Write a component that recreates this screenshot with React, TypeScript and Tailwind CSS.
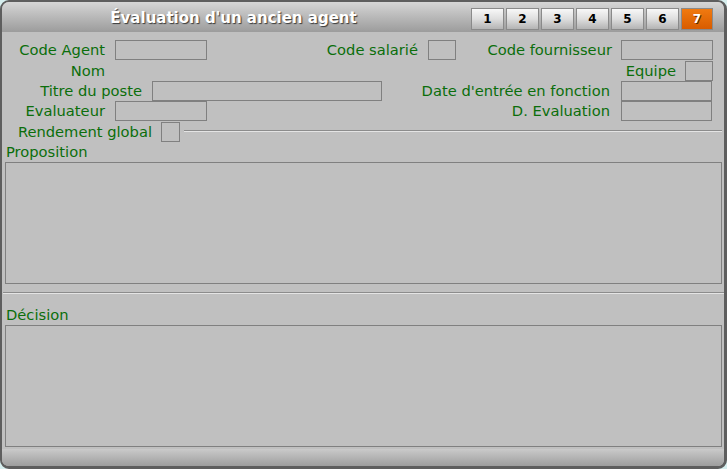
import React from "react";

const TABS = ["1", "2", "3", "4", "5", "6", "7"];

/* flat sunken-less field, same grey as the panel */
function Field({ w, h = "h-[20px]" }: { w: string; h?: string }) {
  return <div className={`${w} ${h} shrink-0 border border-[#808080] bg-[#c0c0c0]`} />;
}

function Label({ w, children }: { w?: string; children: React.ReactNode }) {
  return (
    <div className={`${w ?? ""} shrink-0 whitespace-nowrap text-right leading-[20px]`}>
      {children}
    </div>
  );
}

function Separator({ className = "" }: { className?: string }) {
  return (
    <div className={`flex flex-col ${className}`}>
      <div className="h-px bg-[#8c8c8c]" />
      <div className="h-px bg-[#e4e4e4]" />
    </div>
  );
}

export default function App() {
  return (
    <div className="w-[727px] h-[469px] bg-[#d6eeee]">
      <div
        className="flex h-full w-full flex-col overflow-hidden rounded-[9px] border-t-2 border-l-2 border-r-[3px] border-b-[3px] border-[#5e5e5e] bg-[#c0c0c0] text-[14.7px] text-[#0b6e0b]"
        style={{ fontFamily: '"DejaVu Sans", Verdana, sans-serif' }}
      >
        {/* title bar */}
        <div className="flex h-[30px] shrink-0 items-start bg-gradient-to-b from-[#d6d6d6] to-[#9c9c9c]">
          <div className="flex-1 pr-[6px] pt-[5px] text-center text-[15px] font-bold text-white [text-shadow:1px_1px_1px_#3a3a3a]">
            Évaluation d'un ancien agent
          </div>
          <div className="mr-[11px] mt-[6px] flex gap-[2px]">
            {TABS.map((t) => (
              <div
                key={t}
                className={
                  t === "7"
                    ? "flex h-[22px] w-[32px] items-center justify-center border border-[#8a8a8a] bg-gradient-to-b from-[#f07a10] to-[#d85c00] text-[12px] font-bold text-white [text-shadow:1px_1px_0_#5a2a00]"
                    : "flex h-[22px] w-[33px] items-center justify-center border border-[#8a8a8a] bg-gradient-to-b from-[#f8f8f8] via-[#dedede] to-[#b4b4b4] text-[12px] font-bold text-black"
                }
              >
                {t}
              </div>
            ))}
          </div>
        </div>

        {/* form body */}
        <div className="flex flex-1 flex-col pt-[8px]">
          <div className="flex h-[21px] items-start">
            <Label w="w-[103px]">Code Agent</Label>
            <div className="ml-[10px]"><Field w="w-[92px]" /></div>
            <Label w="w-[211px]">Code salarié</Label>
            <div className="ml-[10px]"><Field w="w-[28px]" /></div>
            <Label w="w-[156px]">Code fournisseur</Label>
            <div className="ml-[9px]"><Field w="w-[92px]" /></div>
          </div>

          <div className="flex h-[20px] items-start">
            <Label w="w-[103px]">Nom</Label>
            <div className="flex-1" />
            <Label>Equipe</Label>
            <div className="ml-[9px] mr-[11px]"><Field w="w-[28px]" /></div>
          </div>

          <div className="flex h-[20px] items-start">
            <Label w="w-[140px]">Titre du poste</Label>
            <div className="ml-[10px]"><Field w="w-[230px]" /></div>
            <div className="flex-1" />
            <Label>Date d'entrée en fonction</Label>
            <div className="ml-[11px] mr-[12px]"><Field w="w-[91px]" /></div>
          </div>

          <div className="flex h-[21px] items-start">
            <Label w="w-[103px]">Evaluateur</Label>
            <div className="ml-[10px]"><Field w="w-[92px]" /></div>
            <div className="flex-1" />
            <Label>D. Evaluation</Label>
            <div className="ml-[11px] mr-[12px]"><Field w="w-[91px]" /></div>
          </div>

          <div className="flex h-[20px] items-start">
            <Label w="w-[150px]">Rendement global</Label>
            <div className="ml-[9px]"><Field w="w-[19px]" h="h-[20px]" /></div>
            <Separator className="ml-[4px] mr-[2px] mt-[8px] flex-1" />
          </div>

          <div className="ml-[4px] h-[20px] leading-[20px]">Proposition</div>
          <div className="ml-[3px] mr-[2px] h-[122px] border border-[#808080]" />

          <Separator className="ml-px mt-[8px]" />

          <div className="ml-[4px] mt-[9px] h-[22px] leading-[24px]">Décision</div>
          <div className="ml-[3px] mr-[2px] h-[122px] border border-[#808080]" />
        </div>

        {/* bottom bar */}
        <div className="h-[17px] shrink-0 bg-gradient-to-b from-[#cacaca] to-[#9e9e9e]" />
      </div>
    </div>
  );
}
